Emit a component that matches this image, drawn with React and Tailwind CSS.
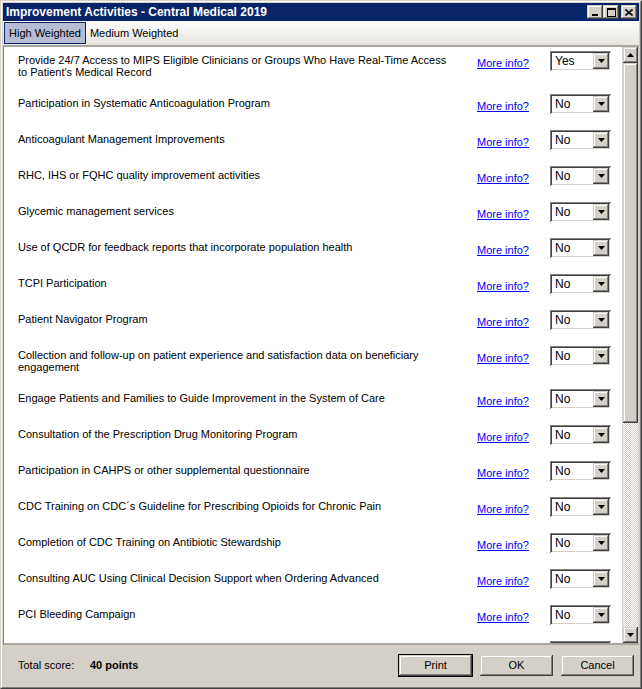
const rows = [
  { lines: ['Provide 24/7 Access to MIPS Eligible Clinicians or Groups Who Have Real-Time Access', "to Patient's Medical Record"], value: 'Yes' },
  { lines: ['Participation in Systematic Anticoagulation Program'], value: 'No' },
  { lines: ['Anticoagulant Management Improvements'], value: 'No' },
  { lines: ['RHC, IHS or FQHC quality improvement activities'], value: 'No' },
  { lines: ['Glycemic management services'], value: 'No' },
  { lines: ['Use of QCDR for feedback reports that incorporate population health'], value: 'No' },
  { lines: ['TCPI Participation'], value: 'No' },
  { lines: ['Patient Navigator Program'], value: 'No' },
  { lines: ['Collection and follow-up on patient experience and satisfaction data on beneficiary', 'engagement'], value: 'No' },
  { lines: ['Engage Patients and Families to Guide Improvement in the System of Care'], value: 'No' },
  { lines: ['Consultation of the Prescription Drug Monitoring Program'], value: 'No' },
  { lines: ['Participation in CAHPS or other supplemental questionnaire'], value: 'No' },
  { lines: ['CDC Training on CDC\u00b4s Guideline for Prescribing Opioids for Chronic Pain'], value: 'No' },
  { lines: ['Completion of CDC Training on Antibiotic Stewardship'], value: 'No' },
  { lines: ['Consulting AUC Using Clinical Decision Support when Ordering Advanced'], value: 'No' },
  { lines: ['PCI Bleeding Campaign'], value: 'No' },
];

const raised =
  'bg-[#d4d0c8] shadow-[inset_-1px_-1px_0_#404040,inset_1px_1px_0_#d4d0c8,inset_-2px_-2px_0_#808080,inset_2px_2px_0_#fff]';

function Arrow({ up }) {
  return (
    <svg width="7" height="4" viewBox="0 0 7 4">
      <path d={up ? 'M3.5 0L7 4H0Z' : 'M0 0H7L3.5 4Z'} fill="#000" />
    </svg>
  );
}

function Combo({ value }) {
  return (
    <div className="flex h-[20px] w-[61px] items-center bg-white shadow-[inset_1px_1px_0_#808080,inset_-1px_-1px_0_#fff,inset_2px_2px_0_#404040,inset_-2px_-2px_0_#d4d0c8]">
      <span className="flex-1 pl-[5px] text-[12px] leading-[14px] text-black">{value}</span>
      <div className={`mr-[2px] flex h-[16px] w-[16px] items-center justify-center ${raised}`}>
        <Arrow />
      </div>
    </div>
  );
}

function WinButton({ children, isDefault }) {
  return (
    <div className={isDefault ? 'border border-black' : 'border border-transparent'}>
      <div className={`flex h-[21px] w-[73px] items-center justify-center text-[11px] text-black ${raised}`}>
        {children}
      </div>
    </div>
  );
}

export default function App() {
  return (
    <div className="h-[689px] w-[642px] overflow-hidden font-['Liberation_Sans',Arial,sans-serif]">
      <div className="flex h-full w-full flex-col border border-t-[#d4d0c8] border-l-[#d4d0c8] border-b-[#404040] border-r-[#404040] bg-[#d4d0c8]">
        <div className="flex h-full w-full flex-col border border-t-white border-l-white border-b-[#808080] border-r-[#808080] p-[1px]">
          {/* Title bar */}
          <div className="flex h-[18px] shrink-0 items-center bg-[#0a246a] pl-[3px] pr-[2px]">
            <span className="flex-1 text-[12px] font-bold leading-[14px] text-white">
              Improvement Activities - Central Medical 2019
            </span>
            <div className="flex items-center">
              <div className={`flex h-[14px] w-[16px] items-end justify-center pb-[3px] ${raised}`}>
                <div className="h-[2px] w-[6px] bg-black" />
              </div>
              <div className={`flex h-[14px] w-[16px] items-center justify-center ${raised}`}>
                <div className="h-[9px] w-[9px] border border-t-2 border-black" />
              </div>
              <div className={`ml-[2px] flex h-[14px] w-[16px] items-center justify-center ${raised}`}>
                <svg width="8" height="7" viewBox="0 0 8 7">
                  <path d="M0.5 0.5L7.5 6.5M7.5 0.5L0.5 6.5" stroke="#000" strokeWidth="1.6" />
                </svg>
              </div>
            </div>
          </div>

          {/* Tabs */}
          <div className="flex h-[26px] shrink-0 items-end border-b-2 border-b-[#a9a7a0] bg-gradient-to-b from-[#fdfdfc] to-[#e6e4dd] pb-[1px] pl-[1px]">
            <div className="flex h-[22px] items-center border border-[#0a246a] bg-[#b6bdd2] px-[4px] text-[11px] text-black">
              High Weighted
            </div>
            <div className="flex h-[22px] items-center px-[4px] text-[11px] text-black">Medium Weighted</div>
          </div>

          {/* Panel */}
          <div className="flex min-h-0 flex-1 border-b-2 border-l border-b-[#a9a7a0] border-l-[#808080]">
            <div className="min-w-0 flex-1 overflow-hidden bg-white pt-[1px]">
              {rows.map((r, i) => (
                <div key={i} className={`flex shrink-0 ${r.lines.length > 1 ? 'h-[43px]' : 'h-[36px]'}`}>
                  <div className="w-[473px] shrink-0 pl-[14px] pt-[6px] text-[11px] leading-[12px] whitespace-nowrap text-black">
                    {r.lines.map((l, j) => (
                      <div key={j}>{l}</div>
                    ))}
                  </div>
                  <div className="w-[73px] shrink-0 pt-[9px] text-[11px] leading-[12px]">
                    <span className="cursor-pointer text-[#0000ff] underline">More info?</span>
                  </div>
                  <div className="pt-[3px]">
                    <Combo value={r.value} />
                  </div>
                </div>
              ))}
              {/* next row, scrolled out of view */}
              <div className="flex h-[36px] shrink-0">
                <div className="w-[546px] shrink-0" />
                <div className="pt-[3px]">
                  <Combo value="" />
                </div>
              </div>
            </div>
            {/* Scrollbar */}
            <div className="flex w-[16px] shrink-0 flex-col border-l border-l-[#d4d0c8] bg-[repeating-conic-gradient(#d4d0c8_0_25%,#ffffff_0_50%)] bg-[length:2px_2px]">
              <div className={`flex h-[16px] shrink-0 items-center justify-center ${raised}`}>
                <Arrow up />
              </div>
              <div className={`h-[360px] shrink-0 ${raised}`} />
              <div className="flex-1" />
              <div className={`flex h-[16px] shrink-0 items-center justify-center ${raised}`}>
                <Arrow />
              </div>
            </div>
            <div className="w-[1px] shrink-0" />
          </div>

          {/* Footer */}
          <div className="flex h-[41px] shrink-0 items-center pl-[15px] pr-[4px] text-[11px] text-black">
            <span className="w-[72px]">Total score:</span>
            <span className="font-bold">40 points</span>
            <div className="flex-1" />
            <div className="flex gap-[6px]">
              <WinButton isDefault>Print</WinButton>
              <WinButton>OK</WinButton>
              <WinButton>Cancel</WinButton>
            </div>
          </div>
        </div>
      </div>
    </div>
  );
}
